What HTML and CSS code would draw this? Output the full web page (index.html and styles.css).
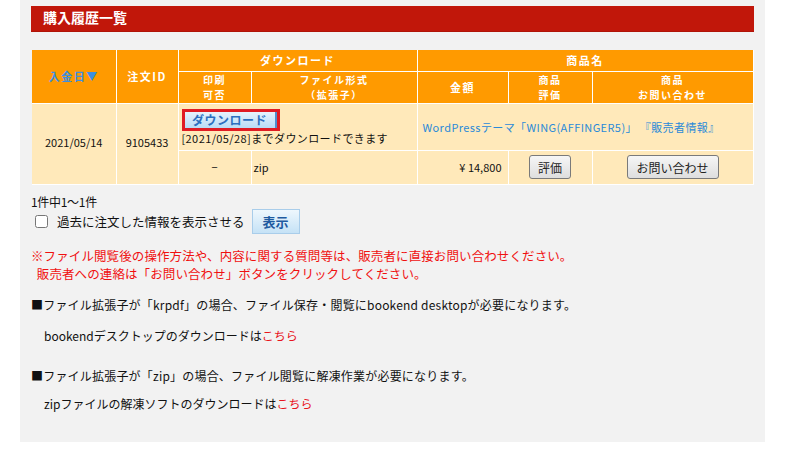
FILE: index.html
```html
<!DOCTYPE html>
<html lang="ja">
<head>
<meta charset="utf-8">
<link rel="stylesheet" href="styles.css">
</head>
<body>
<div class="panel">
  <h1 class="title">購入履歴一覧</h1>
  <table class="hist">
    <colgroup>
      <col class="c1"><col class="c2"><col class="c3"><col class="c4"><col class="c5"><col class="c6"><col class="c7">
    </colgroup>
    <thead>
      <tr class="h1">
        <th rowspan="2" class="sort">入金日▼</th>
        <th rowspan="2">注文ID</th>
        <th colspan="2">ダウンロード</th>
        <th colspan="3">商品名</th>
      </tr>
      <tr class="h2">
        <th class="tight">印刷<br>可否</th>
        <th class="tight">ファイル形式<br>（拡張子）</th>
        <th>金額</th>
        <th class="tight">商品<br>評価</th>
        <th class="tight">商品<br>お問い合わせ</th>
      </tr>
    </thead>
    <tbody>
      <tr class="r1">
        <td rowspan="2" class="ctr lift">2021/05/14</td>
        <td rowspan="2" class="ctr lift">9105433</td>
        <td colspan="2" class="dl">
          <span class="dlwrap"><button class="dlbtn">ダウンロード</button></span>
          <div class="dltext">[2021/05/28]までダウンロードできます</div>
        </td>
        <td colspan="3" class="prod"><a href="#">WordPressテーマ「WING(AFFINGER5)」</a> <a href="#">『販売者情報』</a></td>
      </tr>
      <tr class="r2">
        <td class="ctr">−</td>
        <td class="ext">zip</td>
        <td class="price">¥ 14,800</td>
        <td class="ctr"><button class="gbtn">評価</button></td>
        <td class="ctr"><button class="gbtn wide">お問い合わせ</button></td>
      </tr>
    </tbody>
  </table>

  <p class="count">1件中1〜1件</p>
  <div class="past">
    <input type="checkbox" class="chk">
    <span class="pastlabel">過去に注文した情報を表示させる</span>
    <button class="showbtn">表示</button>
  </div>

  <p class="note">※ファイル閲覧後の操作方法や、内容に関する質問等は、販売者に直接お問い合わせください。<br>&nbsp;&nbsp;販売者への連絡は「お問い合わせ」ボタンをクリックしてください。</p>

  <p class="info">■ファイル拡張子が「krpdf」の場合、ファイル保存・閲覧にbookend desktopが必要になります。</p>
  <p class="sub">bookendデスクトップのダウンロードは<a href="#">こちら</a></p>

  <p class="info second">■ファイル拡張子が「zip」の場合、ファイル閲覧に解凍作業が必要になります。</p>
  <p class="sub last">zipファイルの解凍ソフトのダウンロードは<a href="#">こちら</a></p>
</div>
</body>
</html>
```

FILE: styles.css
```css
html, body {
  margin: 0;
  padding: 0;
  background: #ffffff;
}
body {
  font-family: "Noto Sans CJK JP", "Noto Sans", sans-serif;
  font-size: 12px;
  color: #111;
}
.panel {
  margin-left: 20px;
  width: 745px;
  height: 442px;
  background: #f2f2f2;
  padding: 6px 11px 0 11px;
  box-sizing: border-box;
}
.title {
  margin: 0;
  height: 26px;
  background: #c1170a;
  border-bottom: 1px solid #b01408;
  box-sizing: border-box;
  color: #fff;
  font-size: 14px;
  font-weight: bold;
  line-height: 22px;
  padding-left: 12px;
}
.hist {
  margin: 18px 0 0 1px;
  width: 721px;
  border-collapse: collapse;
  table-layout: fixed;
  font-size: 11px;
}
.c1 { width: 84px; }
.c2 { width: 62px; }
.c3 { width: 73px; }
.c4 { width: 166px; }
.c5 { width: 91px; }
.c6 { width: 84px; }
.c7 { width: 161px; }
.hist th, .hist td {
  border: 1px solid #ffffff;
  padding: 0;
}
.hist tr:first-child th { border-top: none; }
.hist th:first-child, .hist td:first-child { border-left: none; }
.hist th {
  background: #ff9a00;
  color: #ffffff;
  font-weight: bold;
  letter-spacing: 1.5px;
  text-align: center;
  vertical-align: middle;
}
.h1 { height: 21px; }
.h2 { height: 32px; }
.hist th.tight { font-size: 10px; line-height: 14.5px; padding-top: 1px; }
.hist th.sort { color: #3d8fe0; }
.hist td {
  background: #ffe9ba;
  vertical-align: middle;
}
.r1 { height: 47px; }
.r2 { height: 34px; }
.ctr { text-align: center; }
.hist td.lift { padding-bottom: 4px; }
.dl { padding-left: 3px !important; vertical-align: top !important; padding-top: 5px !important; }
.dlwrap {
  display: inline-block;
  border: 3px solid #e01c24;
  line-height: 0;
}
.dlbtn {
  font-family: "Noto Sans CJK JP", sans-serif;
  font-size: 12px;
  line-height: 16px;
  height: 16px;
  width: 92px;
  padding: 0;
  border: none;
  border-right: 2px solid #4e8fcf;
  color: #2b6fbf;
  font-weight: bold;
  letter-spacing: 0.5px;
  background: linear-gradient(#e6f3fd, #b9dcf6);
}
.dltext {
  font-size: 11px;
  letter-spacing: 0.4px;
  line-height: 14px;
  margin-top: 0;
}
.prod { padding-left: 5px !important; font-size: 11px; letter-spacing: 0.4px; }
.prod a { color: #2a8ad8; text-decoration: none; }
.ext { padding-left: 2px !important; }
.price { text-align: right; padding-right: 6px !important; }
.gbtn {
  font-family: "Noto Sans CJK JP", sans-serif;
  font-size: 12px;
  height: 24px;
  padding: 0 8px;
  color: #222;
  border: 1px solid #7a7a7a;
  border-radius: 3px;
  background: linear-gradient(#f6f6f6, #dedede);
}
.gbtn.wide { width: 92px; }
.count {
  margin: 10px 0 0 0;
  font-size: 12px;
  line-height: 14px;
  letter-spacing: -0.3px;
}
.past {
  display: flex;
  align-items: center;
  margin-top: 0;
  height: 26px;
}
.chk {
  margin: 0 0 0 4px;
  width: 13px;
  height: 13px;
}
.pastlabel {
  margin-left: 9px;
  font-size: 12.5px;
}
.showbtn {
  margin-left: 7px;
  width: 48px;
  height: 25px;
  font-family: "Noto Sans CJK JP", sans-serif;
  font-size: 13px;
  font-weight: bold;
  color: #1e5aa0;
  border: 1px solid #a9cdea;
  background: linear-gradient(#eef7fd, #c5e2f6);
  padding: 0;
}
.note {
  margin: 12px 0 0 0;
  color: #f01010;
  font-size: 12.5px;
  line-height: 18px;
  letter-spacing: 0.1px;
}
.info {
  margin: 13px 0 0 0;
  font-size: 12px;
  line-height: 17px;
  letter-spacing: 0.2px;
}
.info.second { margin-top: 23px; }
.sub {
  margin: 14px 0 0 13px;
  font-size: 12px;
  line-height: 17px;
}
.sub.last { margin-top: 11px; }
.sub a { color: #e8141c; text-decoration: none; }
```
